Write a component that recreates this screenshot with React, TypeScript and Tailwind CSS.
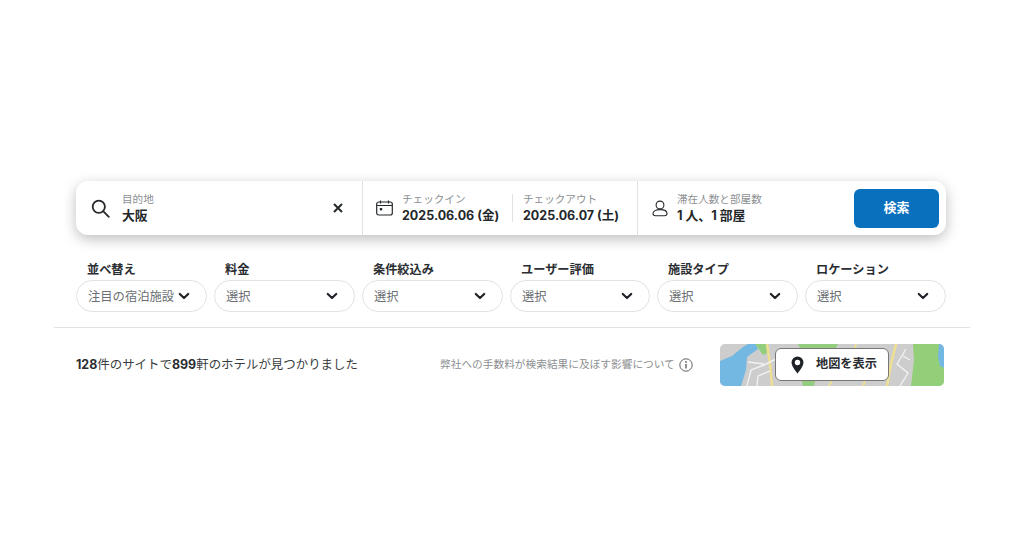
const font = { fontFamily: '"Inter", "Noto Sans CJK JP", sans-serif' };

function Chevron() {
  return (
    <svg width="14" height="14" viewBox="0 0 14 14" fill="none" className="shrink-0">
      <path d="M2.800 5 7 9l4.200-4" stroke="#1f2328" strokeWidth="2.200" strokeLinecap="round" strokeLinejoin="round" />
    </svg>
  );
}

function Filter({ label, value, width }: { label: string; value: string; width: string }) {
  return (
    <div className={`flex flex-col ${width}`}>
      <div className="pl-[11px] text-[12.200px] leading-[20px] font-bold text-[#2a2d31] h-[20px] whitespace-nowrap">{label}</div>
      <div className="flex items-center h-[32px] rounded-full border border-[#e3e3e3] bg-white pl-[11px] pr-[15px]">
        <span className="flex-1 pt-[2px] text-[12.300px] text-[#6b6f73] whitespace-nowrap">{value}</span>
        <Chevron />
      </div>
    </div>
  );
}

function Field({ label, value, valueSize = "text-[12.800px]" }: { label: string; value: string; valueSize?: string }) {
  return (
    <div className="flex flex-col pt-[1px]">
      <span className="text-[10.600px] leading-[14px] text-[#8c8f92] whitespace-nowrap">{label}</span>
      <span className={`${valueSize} leading-[17px] font-bold text-[#24272a] whitespace-nowrap`}>{value}</span>
    </div>
  );
}

function MapArt() {
  return (
    <svg viewBox="0 0 224 42" width="224" height="42" preserveAspectRatio="none" className="block rounded-[5px]">
      <rect width="224" height="42" fill="#cdcdcd" />
      <path d="M0 17 L12 12 L23 3 L28 0 L36 0 L38 5 L27 13 L26 26 L21 42 L0 42Z" fill="#72b8e2" />
      <path d="M35 0 L47 0 L48 9 L43 11Z" fill="#93cd7f" />
      <path d="M78 0 L118 0 L116 4 L80 4Z" fill="#93cd7f" />
      <path d="M82 37 L95 37 L94 42 L83 42Z" fill="#93cd7f" />
      <path d="M193 0 L219 0 L224 6 L224 42 L191 42 L194 16Z" fill="#93cf78" />
      <path d="M219 0 L224 0 L224 24 L220 22 L218 12Z" fill="#72b8e2" />
      <path d="M47 0 L50 20 L52 42" stroke="#eedf92" strokeWidth="2.500" fill="none" />
      <path d="M176 0 L171 20 L167 42" stroke="#eedf92" strokeWidth="2.500" fill="none" />
      <path d="M136 0 L134 6 M112 36 L109 42 M145 37 L143 42" stroke="#eedf92" strokeWidth="2" fill="none" />
      <path d="M27 42 L31 26 L44 21 L56 15 M37 42 L38 32 L50 27 M28 18 L44 20 M186 5 L177 20 L188 29 L180 42 M183 12 L190 16" stroke="#f1f1f1" strokeWidth="1.400" fill="none" />
    </svg>
  );
}

export default function App() {
  return (
    <div className="w-[1024px] h-[538px] bg-white pt-[181px] overflow-hidden" style={font}>
      <div className="mx-[76px] w-[870px] h-[54px] flex items-center rounded-[12px] bg-white shadow-[0_4px_14px_rgba(0,0,0,0.26)]">
        <div className="w-[287px] h-full flex items-center pl-[15px] pr-[19px] border-r border-[#e2e2e2]">
          <svg width="19" height="19" viewBox="0 0 19 19" fill="none" className="shrink-0">
            <circle cx="7.800" cy="7.800" r="6.100" stroke="#26292c" strokeWidth="1.800" />
            <path d="m12.400 12.400 5.400 5.400" stroke="#26292c" strokeWidth="1.800" strokeLinecap="round" />
          </svg>
          <div className="ml-[12px] flex-1">
            <Field label="目的地" value="大阪" />
          </div>
          <svg width="10" height="10" viewBox="0 0 10 10" fill="none" className="shrink-0">
            <path d="m1 1 8 8M9 1 1 9" stroke="#26292c" strokeWidth="2" />
          </svg>
        </div>
        <div className="w-[275px] h-full flex items-center pl-[13px] border-r border-[#e2e2e2]">
          <svg width="17" height="16" viewBox="0 0 17 16" fill="none" className="shrink-0">
            <rect x="0.700" y="2" width="15.600" height="13" rx="2" stroke="#26292c" strokeWidth="1.200" />
            <path d="M1 5.500h15M4.500 0.500v3M12.500 0.500v3" stroke="#26292c" strokeWidth="1.200" />
            <rect x="3.800" y="8" width="2.400" height="2.400" fill="#26292c" />
          </svg>
          <div className="ml-[9px] w-[110px]">
            <Field label="チェックイン" value="2025.06.06 (金)" valueSize="text-[12.500px]" />
          </div>
          <div className="w-px h-[28px] bg-[#e2e2e2] mr-[10px]" />
          <Field label="チェックアウト" value="2025.06.07 (土)" valueSize="text-[12.500px]" />
        </div>
        <div className="flex-1 h-full flex items-center pl-[14px] pr-[7px]">
          <svg width="16" height="17" viewBox="0 0 16 17" fill="none" className="shrink-0">
            <circle cx="8" cy="5" r="3.900" stroke="#26292c" strokeWidth="1.100" />
            <path d="M1 13.500C1 11 4 9.600 8 9.600s7 1.400 7 3.900c0 1.500-1 2.200-2.500 2.200h-9C2 15.700 1 15 1 13.500Z" stroke="#26292c" strokeWidth="1.100" />
          </svg>
          <div className="ml-[9px] flex-1">
            <Field label="滞在人数と部屋数" value="1 人、1 部屋" />
          </div>
          <button className="w-[85px] h-[39px] rounded-[6px] bg-[#0870bd] text-white text-[13px] font-bold">検索</button>
        </div>
      </div>

      <div className="mx-[76px] mt-[25px] w-[870px] flex justify-between">
        <Filter label="並べ替え" value="注目の宿泊施設" width="w-[131px]" />
        <Filter label="料金" value="選択" width="w-[141px]" />
        <Filter label="条件絞込み" value="選択" width="w-[141px]" />
        <Filter label="ユーザー評価" value="選択" width="w-[140px]" />
        <Filter label="施設タイプ" value="選択" width="w-[141px]" />
        <Filter label="ロケーション" value="選択" width="w-[141px]" />
      </div>

      <div className="mx-[54px] mt-[15px] w-[916px] h-px bg-[#e2e2e2]" />

      <div className="mx-[76px] mt-[16px] w-[868px] h-[42px] flex items-center">
        <div className="w-[364px] pt-[1px] text-[12.450px] text-[#3a3d40] whitespace-nowrap">
          <b className="text-[#2a2d31]">128</b>件のサイトで<b className="text-[#2a2d31]">899</b>軒のホテルが見つかりました
        </div>
        <div className="flex items-center w-[280px] text-[10.700px] text-[#8c8f92] whitespace-nowrap">
          <span>弊社への手数料が検索結果に及ぼす影響について</span>
          <svg width="14" height="14" viewBox="0 0 14 14" fill="none" className="ml-[4px] shrink-0">
            <circle cx="7" cy="7" r="6.200" stroke="#5d6063" strokeWidth="1" />
            <path d="M7 6v4.400" stroke="#5d6063" strokeWidth="1.400" />
            <circle cx="7" cy="3.900" r="0.900" fill="#5d6063" />
          </svg>
        </div>
        <div className="relative w-[224px] h-[42px]">
          <MapArt />
          <div className="absolute left-[55px] top-[4px] w-[114px] h-[33px] flex items-center rounded-[6px] border border-[#777] bg-white pl-[15px]">
            <svg width="13" height="18" viewBox="0 0 13 18" fill="none" className="shrink-0">
              <path fillRule="evenodd" clipRule="evenodd" d="M6.500 0.500a6 6 0 0 1 6 6c0 4-6 11-6 11s-6-7-6-11a6 6 0 0 1 6-6Zm0 3.300a2.700 2.700 0 1 0 0 5.400 2.700 2.700 0 0 0 0-5.400Z" fill="#1f2328" />
            </svg>
            <span className="ml-[12px] text-[12.200px] font-bold text-[#2a2d31] whitespace-nowrap">地図を表示</span>
          </div>
        </div>
      </div>
    </div>
  );
}
